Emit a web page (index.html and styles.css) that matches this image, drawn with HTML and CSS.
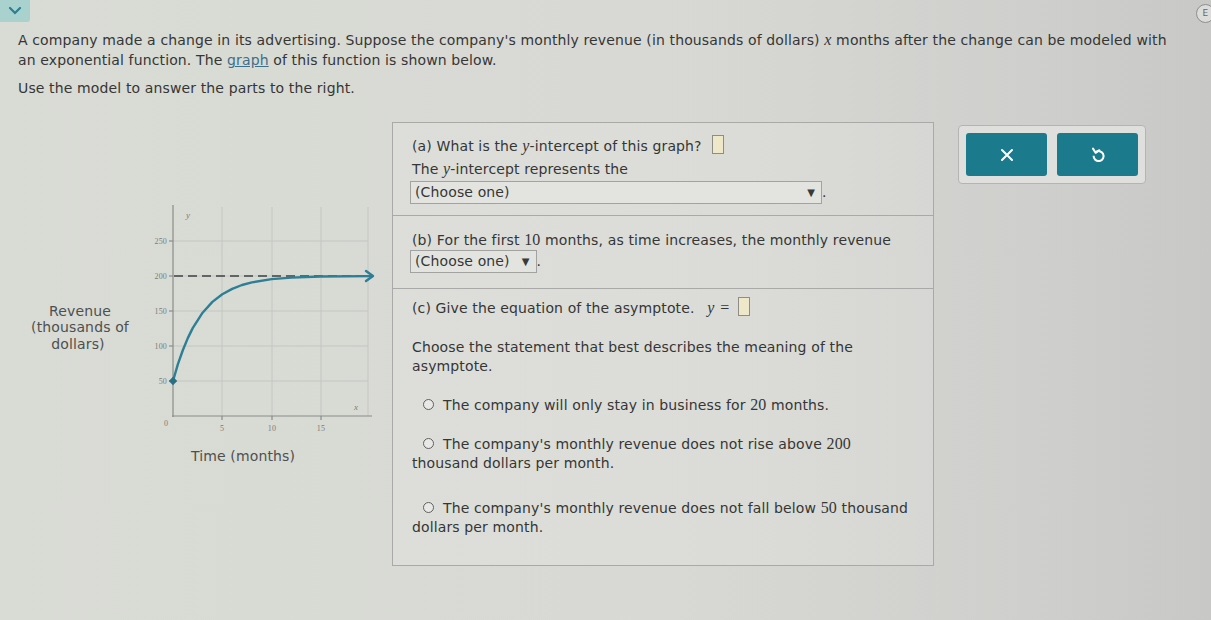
FILE: index.html
```html
<!DOCTYPE html>
<html lang="en">
<head>
  <meta charset="UTF-8" />
  <title>Exponential Model - Advertising Revenue</title>
  <link rel="stylesheet" href="styles.css">
</head>
<body>
  <div class="topbar">
    <button class="tab-toggle" aria-label="Collapse">
      <svg width="14" height="10" viewBox="0 0 14 10"><path d="M2 2 L7 7 L12 2" fill="none" stroke="#2b7f93" stroke-width="2.2" stroke-linecap="round"/></svg>
    </button>
    <span class="corner-btn">E</span>
  </div>

  <div class="intro">
    <p>A company made a change in its advertising. Suppose the company's monthly revenue (in thousands of dollars) <i class="m">x</i> months after the change can be modeled with an exponential function. The <a href="#">graph</a> of this function is shown below.</p>
    <p class="use">Use the model to answer the parts to the right.</p>
  </div>

  <div class="work">
    <div class="graph-col">
      <svg class="graph" width="392" height="350" viewBox="0 0 392 350">
        <!-- grid -->
        <g stroke="#c4c6c2" stroke-width="1">
          <line x1="173" y1="119" x2="368" y2="119"/>
          <line x1="173" y1="154" x2="368" y2="154"/>
          <line x1="173" y1="189" x2="368" y2="189"/>
          <line x1="173" y1="224" x2="368" y2="224"/>
          <line x1="173" y1="259" x2="368" y2="259"/>
          <line x1="222" y1="85" x2="222" y2="294"/>
          <line x1="272" y1="85" x2="272" y2="294"/>
          <line x1="321" y1="85" x2="321" y2="294"/>
          <line x1="368" y1="85" x2="368" y2="294"/>
        </g>
        <!-- axes -->
        <g stroke="#8a8c88" stroke-width="1.2">
          <line x1="173" y1="83" x2="173" y2="295"/>
          <line x1="172" y1="294" x2="372" y2="294"/>
          <line x1="169" y1="119" x2="173" y2="119"/>
          <line x1="169" y1="154" x2="173" y2="154"/>
          <line x1="169" y1="189" x2="173" y2="189"/>
          <line x1="169" y1="224" x2="173" y2="224"/>
          <line x1="169" y1="259" x2="173" y2="259"/>
          <line x1="222" y1="294" x2="222" y2="298"/>
          <line x1="272" y1="294" x2="272" y2="298"/>
          <line x1="321" y1="294" x2="321" y2="298"/>
        </g>
        <g class="tick">
          <text x="167" y="122" text-anchor="end">250</text>
          <text x="167" y="157" text-anchor="end">200</text>
          <text x="167" y="192" text-anchor="end">150</text>
          <text x="167" y="227" text-anchor="end">100</text>
          <text x="167" y="262" text-anchor="end">50</text>
          <text x="166" y="304" text-anchor="middle">0</text>
          <text x="222" y="309" text-anchor="middle">5</text>
          <text x="272" y="309" text-anchor="middle">10</text>
          <text x="321" y="309" text-anchor="middle">15</text>
          <text x="186" y="96" class="var">y</text>
          <text x="354" y="288" class="var">x</text>
        </g>
        <!-- asymptote y = 200 -->
        <line x1="174" y1="154" x2="366" y2="154" stroke="#3d4244" stroke-width="1.6" stroke-dasharray="9 5"/>
        <!-- revenue curve -->
        <path d="M173 259 L177.9 242.1 L182.9 228 L187.8 216.1 L192.7 206.1 L202.6 190.7 L212.4 179.9 L222.3 172.3 L232.2 166.9 L242 163 L251.9 160.4 L271.6 157.1 L291.3 155.6 L320.9 154.5 L372 154.1" fill="none" stroke="#2c7f95" stroke-width="2.4" stroke-linejoin="round"/>
        <path d="M366 149 L373 154 L366 159" fill="none" stroke="#2c7f95" stroke-width="2.4" stroke-linecap="round" stroke-linejoin="round"/>
        <rect x="170" y="256" width="6" height="6" fill="#2a6f83" transform="rotate(45 173 259)"/>
        <!-- axis titles -->
        <g class="axis-title">
          <text x="80" y="194" text-anchor="middle">Revenue</text>
          <text x="80" y="210" text-anchor="middle">(thousands of</text>
          <text x="78" y="227" text-anchor="middle">dollars)</text>
          <text x="243" y="339" text-anchor="middle">Time (months)</text>
        </g>
      </svg>
    </div>

    <div class="panel">
      <div class="part part-a">
        <p>(a) What is the <i class="m">y</i>-intercept of this graph? <span class="blank"></span></p>
        <p>The <i class="m">y</i>-intercept represents the</p>
        <p class="pick"><span class="select wide">(Choose one)<span class="arrow">▼</span></span>.</p>
      </div>
      <div class="part part-b">
        <p>(b) For the first <span class="n">10</span> months, as time increases, the monthly revenue</p>
        <p class="pick"><span class="select">(Choose one)<span class="arrow">▼</span></span>.</p>
      </div>
      <div class="part part-c">
        <p>(c) Give the equation of the asymptote. <i class="m eq">y</i><span class="n eq-sign">=</span><span class="blank"></span></p>
        <p class="stmt">Choose the statement that best describes the meaning of the asymptote.</p>
        <p class="opt"><span class="radio"></span>The company will only stay in business for <span class="n">20</span> months.</p>
        <p class="opt"><span class="radio"></span>The company's monthly revenue does not rise above <span class="n">200</span> thousand dollars per month.</p>
        <p class="opt last"><span class="radio"></span>The company's monthly revenue does not fall below <span class="n">50</span> thousand dollars per month.</p>
      </div>
    </div>

    <div class="actions">
      <button class="act" aria-label="Clear">
        <svg width="14" height="14" viewBox="0 0 14 14"><path d="M2 2 L12 12 M12 2 L2 12" stroke="#fff" stroke-width="2" stroke-linecap="round"/></svg>
      </button>
      <button class="act" aria-label="Undo">
        <svg width="16" height="18" viewBox="0 0 16 18"><path d="M5.2 6.4 A5 5 0 1 1 3.6 9.8" fill="none" stroke="#fff" stroke-width="2"/><path d="M3 2.6 L5.6 6.8 L9.4 4.2" fill="none" stroke="#fff" stroke-width="2" stroke-linejoin="round" stroke-linecap="round"/></svg>
      </button>
    </div>
  </div>
</body>
</html>
```

FILE: styles.css
```css
body {
  margin: 0;
  height: 620px;
  overflow: hidden;
  font-family: "DejaVu Sans", Verdana, sans-serif;
  font-size: 14px;
  letter-spacing: 0.13px;
  color: #353635;
  background: linear-gradient(90deg, #d9dbd5 0%, #d8d9d4 55%, #cfd0cd 85%, #c8c9c7 100%);
}
p {
  margin: 0;
}
.m,
.n {
  font-family: "Liberation Serif", "Times New Roman", serif;
  font-size: 16px;
  line-height: 1;
}

.topbar {
  display: flex;
  justify-content: space-between;
  height: 23px;
}
.tab-toggle {
  width: 30px;
  height: 22px;
  border: none;
  padding: 0;
  background: #a9d2cf;
  border-radius: 0 0 3px 0;
  display: flex;
  align-items: center;
  justify-content: center;
}
.corner-btn {
  width: 17px;
  height: 17px;
  margin-top: 4px;
  margin-right: -4px;
  border: 1px solid #8e8f8c;
  border-radius: 50%;
  background: #dcdcda;
  font-size: 9px;
  line-height: 17px;
  text-align: center;
  color: #666;
}

.intro {
  padding: 7px 30px 0 18px;
  line-height: 20px;
}
.intro a {
  color: #3c6f8a;
  text-decoration: underline;
}
.intro .use {
  margin-top: 8px;
}

.work {
  display: flex;
  align-items: flex-start;
  margin-top: 24px;
}
.graph-col {
  width: 392px;
  flex: none;
}
.graph {
  display: block;
}
.tick text {
  font-family: "Liberation Serif", serif;
  font-size: 8px;
  fill: #7b7d7a;
}
.tick .var {
  font-style: italic;
  font-size: 9px;
}
.axis-title text {
  font-family: "DejaVu Sans", Verdana, sans-serif;
  font-size: 14px;
  fill: #4e504e;
}

.panel {
  width: 540px;
  height: 442px;
  flex: none;
  border: 1px solid #a9aaa7;
  background: rgba(255, 255, 255, 0.12);
}
.part {
  padding: 0 16px 0 19px;
  border-bottom: 1px solid #a9aaa7;
}
.part-a {
  padding-top: 12px;
  padding-bottom: 11px;
  line-height: 23px;
}
.part-b {
  padding-top: 14px;
  padding-bottom: 15px;
  line-height: 20px;
}
.pick {
  height: 23px;
  line-height: 23px;
}
.part-c {
  border-bottom: none;
  padding-top: 8px;
  line-height: 19px;
}
.select {
  display: inline-flex;
  justify-content: space-between;
  align-items: center;
  box-sizing: border-box;
  height: 23px;
  padding: 0 6px 0 4px;
  margin-left: -2px;
  border: 1px solid #a2a3a0;
  background: #e3e4e0;
  line-height: 21px;
  vertical-align: top;
}
.select.wide {
  width: 412px;
}
.arrow {
  font-size: 10px;
  margin-left: 12px;
  color: #3a3a3a;
}
.blank {
  display: inline-block;
  width: 10px;
  height: 17px;
  margin-left: 6px;
  border: 1px solid #8d8c86;
  background: #efe8c8;
  vertical-align: -3px;
}
.eq {
  margin-left: 8px;
}
.eq-sign {
  margin: 0 8px 0 6px;
}
.eq-sign + .blank {
  margin-left: 0;
}
.stmt {
  margin-top: 20px;
  padding-right: 40px;
}
.opt {
  margin-top: 20px;
  text-indent: 11px;
}
.opt.last {
  margin-top: 26px;
}
.radio {
  display: inline-block;
  width: 9px;
  height: 9px;
  margin-right: 9px;
  border: 1px solid #5f605e;
  border-radius: 50%;
  background: #e8e9e6;
  vertical-align: 0;
}

.actions {
  display: flex;
  gap: 10px;
  margin: 3px 0 0 24px;
  padding: 7px;
  border: 1px solid #b4b5b2;
  border-radius: 4px;
  background: #dfe0dd;
}
.act {
  width: 81px;
  height: 43px;
  border: none;
  border-radius: 3px;
  background: #1b7b8c;
  display: flex;
  align-items: center;
  justify-content: center;
  cursor: pointer;
}
```
